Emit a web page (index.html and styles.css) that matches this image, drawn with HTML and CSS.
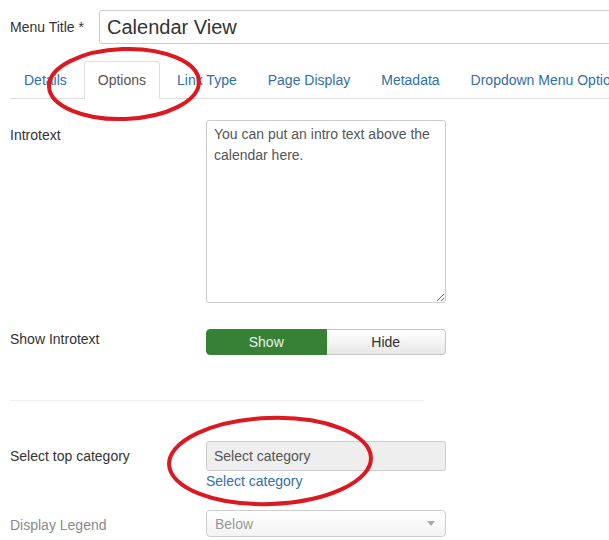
FILE: index.html
```html
<!DOCTYPE html>
<html lang="en">
<head>
    <meta charset="UTF-8">
    <meta name="viewport" content="width=device-width, initial-scale=1.0">
    <title>Menu Item: Calendar View</title>
    <link rel="stylesheet" href="styles.css">
</head>
<body>
    <div class="page">
        <!-- Title -->
        <div class="title-row">
            <label class="title-label" for="menu-title">Menu Title *</label>
            <input class="title-input" id="menu-title" type="text" value="Calendar View">
        </div>

        <!-- Tabs -->
        <ul class="tabs">
            <li><a href="#">Details</a></li>
            <li class="active"><a href="#">Options</a></li>
            <li><a href="#">Link Type</a></li>
            <li><a href="#">Page Display</a></li>
            <li><a href="#">Metadata</a></li>
            <li><a href="#">Dropdown Menu Options</a></li>
        </ul>

        <!-- Options tab -->
        <div class="tab-content">
            <div class="control-group">
                <div class="control-label">Introtext</div>
                <div class="controls">
                    <textarea class="intro-area">You can put an intro text above the calendar here.</textarea>
                </div>
            </div>

            <div class="control-group">
                <div class="control-label tight">Show Introtext</div>
                <div class="controls">
                    <div class="toggle">
                        <button type="button" class="toggle-btn on">Show</button>
                        <button type="button" class="toggle-btn">Hide</button>
                    </div>
                </div>
            </div>

            <hr class="divider">

            <div class="control-group">
                <div class="control-label">Select top category</div>
                <div class="controls">
                    <input class="readonly-input" type="text" value="Select category" readonly>
                    <a href="#" class="select-link">Select category</a>
                </div>
            </div>

            <div class="control-group">
                <div class="control-label muted">Display Legend</div>
                <div class="controls">
                    <div class="fake-select">
                        <span>Below</span>
                        <span class="caret"></span>
                    </div>
                </div>
            </div>
        </div>

        <!-- Red marker circles drawn over the screenshot -->
        <svg class="marks" width="609" height="540" viewBox="0 0 609 540">
            <ellipse cx="124" cy="84" rx="75" ry="35" transform="rotate(-2 124 84)"></ellipse>
            <ellipse cx="270" cy="461" rx="101" ry="43" transform="rotate(-2 270 461)"></ellipse>
        </svg>
    </div>
</body>
</html>
```

FILE: styles.css
```css
body {
    margin: 0;
    font-family: 'Liberation Sans', Arial, sans-serif;
    font-size: 14px;
    color: #333;
    background-color: #fff;
    overflow: hidden;
}
.page {
    position: relative;
    width: 760px;
    padding: 10px 0 0 10px;
}
.title-row {
    display: flex;
    align-items: center;
}
.title-label {
    width: 89px;
}
.title-input {
    width: 600px;
    height: 34px;
    box-sizing: border-box;
    padding: 0 7px;
    border: 1px solid #ccc;
    border-radius: 3px;
    font-family: inherit;
    font-size: 20px;
    color: #333;
}
.tabs {
    display: flex;
    list-style: none;
    margin: 17px 0 0;
    padding: 0;
    border-bottom: 1px solid #ddd;
    white-space: nowrap;
}
.tabs li {
    margin: 0 3px -1px 0;
}
.tabs a {
    display: block;
    line-height: 36px;
    padding: 0 13px;
    border: 1px solid transparent;
    border-radius: 4px 4px 0 0;
    color: #336ea8;
    text-decoration: none;
}
.tabs .active a {
    color: #555;
    background-color: #fff;
    border-color: #ddd #ddd transparent;
}
.tab-content {
    padding-top: 21px;
}
.control-group {
    display: flex;
    margin-bottom: 19px;
}
.control-label {
    width: 196px;
    flex-shrink: 0;
    padding-top: 5px;
    line-height: 20px;
}
.control-label.tight {
    padding-top: 0;
}
.control-label.muted {
    color: #8a8a8a;
}
.intro-area {
    display: block;
    width: 240px;
    height: 183px;
    box-sizing: border-box;
    margin: 0 0 7px;
    padding: 3px 7px;
    border: 1px solid #ccc;
    border-radius: 3px;
    font-family: inherit;
    font-size: 14px;
    line-height: 21px;
    color: #555;
}
.toggle {
    display: flex;
    width: 240px;
    height: 26px;
}
.toggle-btn {
    flex: 1;
    margin: 0;
    padding: 0;
    border: 1px solid #c5c5c5;
    border-left: none;
    border-radius: 0 4px 4px 0;
    background: linear-gradient(#fff, #e8e8e8);
    font-family: inherit;
    font-size: 14px;
    color: #333;
}
.toggle-btn.on {
    border: 1px solid #378137;
    border-radius: 4px 0 0 4px;
    background: #378137;
    color: #e8f2e8;
}
.divider {
    width: 414px;
    margin: 45px 0 40px;
    border: none;
    border-top: 1px solid #eee;
}
.readonly-input {
    display: block;
    width: 240px;
    height: 30px;
    box-sizing: border-box;
    padding: 0 7px;
    border: 1px solid #ccc;
    border-radius: 3px;
    background-color: #eee;
    font-family: inherit;
    font-size: 14px;
    color: #555;
}
.select-link {
    display: block;
    line-height: 20px;
    color: #336ea8;
    text-decoration: none;
}
.fake-select {
    display: flex;
    align-items: center;
    justify-content: space-between;
    width: 240px;
    height: 27px;
    box-sizing: border-box;
    padding: 0 10px 0 8px;
    border: 1px solid #ccc;
    border-radius: 4px;
    background: linear-gradient(#fff, #f3f3f3);
    color: #999;
}
.caret {
    width: 0;
    height: 0;
    border-left: 4px solid transparent;
    border-right: 4px solid transparent;
    border-top: 5px solid #aaa;
}
.marks {
    position: absolute;
    left: 0;
    top: 0;
    pointer-events: none;
}
.marks ellipse {
    fill: none;
    stroke: #dc1820;
    stroke-width: 4;
}
```
